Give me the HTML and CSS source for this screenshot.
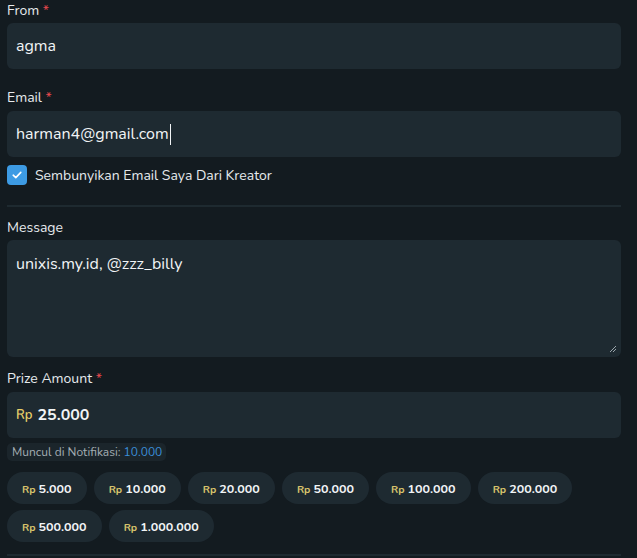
FILE: index.html
```html
<!DOCTYPE html>
<html lang="id">
<head>
<meta charset="utf-8">
<title>Form</title>
<link rel="stylesheet" href="styles.css">
</head>
<body>
<form class="form">
  <div class="group">
    <label class="label">From <span class="req">*</span></label>
    <div class="field">agma</div>
  </div>
  <div class="group group-email">
    <label class="label">Email <span class="req">*</span></label>
    <div class="field">harman4@gmail.com<span class="caret"></span></div>
    <div class="check-row">
      <span class="checkbox">
        <svg width="12" height="12" viewBox="0 0 12 12"><path d="M2.2 6.2 L4.8 8.6 L9.8 3.4" fill="none" stroke="#fff" stroke-width="1.6" stroke-linecap="round" stroke-linejoin="round"/></svg>
      </span>
      <span class="check-text">Sembunyikan Email Saya Dari Kreator</span>
    </div>
  </div>
  <div class="divider"></div>
  <div class="group group-msg">
    <label class="label">Message</label>
    <div class="field textarea">unixis.my.id, @zzz_billy
      <svg class="grip" width="8" height="8" viewBox="0 0 8 8"><path d="M1 7 L7 1 M4 7 L7 4" stroke="#9aa5ab" stroke-width="1"/></svg>
    </div>
  </div>
  <div class="group group-prize">
    <label class="label">Prize Amount <span class="req">*</span></label>
    <div class="field amount"><span class="rp">Rp</span><b>25.000</b></div>
    <div class="notif">Muncul di Notifikasi: <span class="blue">10.000</span></div>
    <div class="chips">
      <button type="button" class="chip"><span class="rp-s">Rp</span>5.000</button>
      <button type="button" class="chip"><span class="rp-s">Rp</span>10.000</button>
      <button type="button" class="chip"><span class="rp-s">Rp</span>20.000</button>
      <button type="button" class="chip"><span class="rp-s">Rp</span>50.000</button>
      <button type="button" class="chip"><span class="rp-s">Rp</span>100.000</button>
      <button type="button" class="chip"><span class="rp-s">Rp</span>200.000</button>
      <button type="button" class="chip"><span class="rp-s">Rp</span>500.000</button>
      <button type="button" class="chip"><span class="rp-s">Rp</span>1.000.000</button>
    </div>
  </div>
  <div class="divider bottom"></div>
</form>
</body>
</html>
```
FILE: styles.css
```css
html, body {
  margin: 0;
  padding: 0;
  background: #131b20;
  height: 100%;
  overflow: hidden;
}
body {
  font-family: "Nunito", "Lato", "Open Sans", sans-serif;
  color: #e6eaed;
}
.form {
  width: 614px;
  margin-left: 7px;
  display: flex;
  flex-direction: column;
}
.group {
  display: flex;
  flex-direction: column;
}
.label {
  font-size: 14px;
  line-height: 20px;
  height: 20px;
  padding-top: 1px;
  margin-bottom: 2px;
  color: #e6eaed;
}
.group-email { margin-top: 18px; }
.group-email .label { margin-bottom: 3px; }
.req { color: #e5484d; }
.field {
  background: #1e2a31;
  border-radius: 6px;
  height: 46px;
  box-sizing: border-box;
  padding: 0 9px;
  display: flex;
  align-items: center;
  font-size: 16px;
  color: #f1f4f6;
}
.caret {
  display: inline-block;
  width: 1px;
  height: 21px;
  background: #f1f4f6;
  margin-left: 1px;
}
.check-row {
  display: flex;
  align-items: center;
  gap: 8px;
  margin-top: 8px;
  height: 20px;
}
.checkbox {
  width: 20px;
  height: 20px;
  border-radius: 4px;
  background: #3d9be4;
  display: flex;
  align-items: center;
  justify-content: center;
}
.check-text {
  font-size: 14px;
  color: #e6eaed;
}
.divider {
  height: 2px;
  background: #1e2a30;
  margin-top: 20px;
}
.group-msg { margin-top: 10px; }
.textarea {
  height: 117px;
  align-items: flex-start;
  padding-top: 13px;
  position: relative;
}
.grip {
  position: absolute;
  right: 4px;
  bottom: 4px;
}
.group-prize { margin-top: 11px; }
.group-prize .label { margin-bottom: 3px; }
.amount b {
  font-weight: 700;
  font-size: 16px;
  margin-left: 5px;
}
.rp {
  color: #e6cf6a;
  font-size: 13px;
  font-weight: 600;
}
.notif {
  align-self: flex-start;
  margin-top: 5px;
  height: 18px;
  line-height: 18px;
  padding: 0 4px 0 5px;
  border-radius: 5px;
  background: #1b252b;
  font-size: 12px;
  color: #a3adb3;
}
.blue { color: #3a8fd9; }
.chips {
  display: flex;
  flex-wrap: wrap;
  gap: 6px 7px;
  margin-top: 11px;
}
.chip {
  height: 32px;
  border: none;
  border-radius: 16px;
  background: #1e2a31;
  padding: 0 15px;
  font-family: inherit;
  font-size: 12.5px;
  font-weight: 700;
  color: #f1f4f6;
}
.rp-s {
  color: #d8c46c;
  font-size: 10.5px;
  font-weight: 700;
  margin-right: 3px;
}
.divider.bottom {
  margin-top: 12px;
}
```
